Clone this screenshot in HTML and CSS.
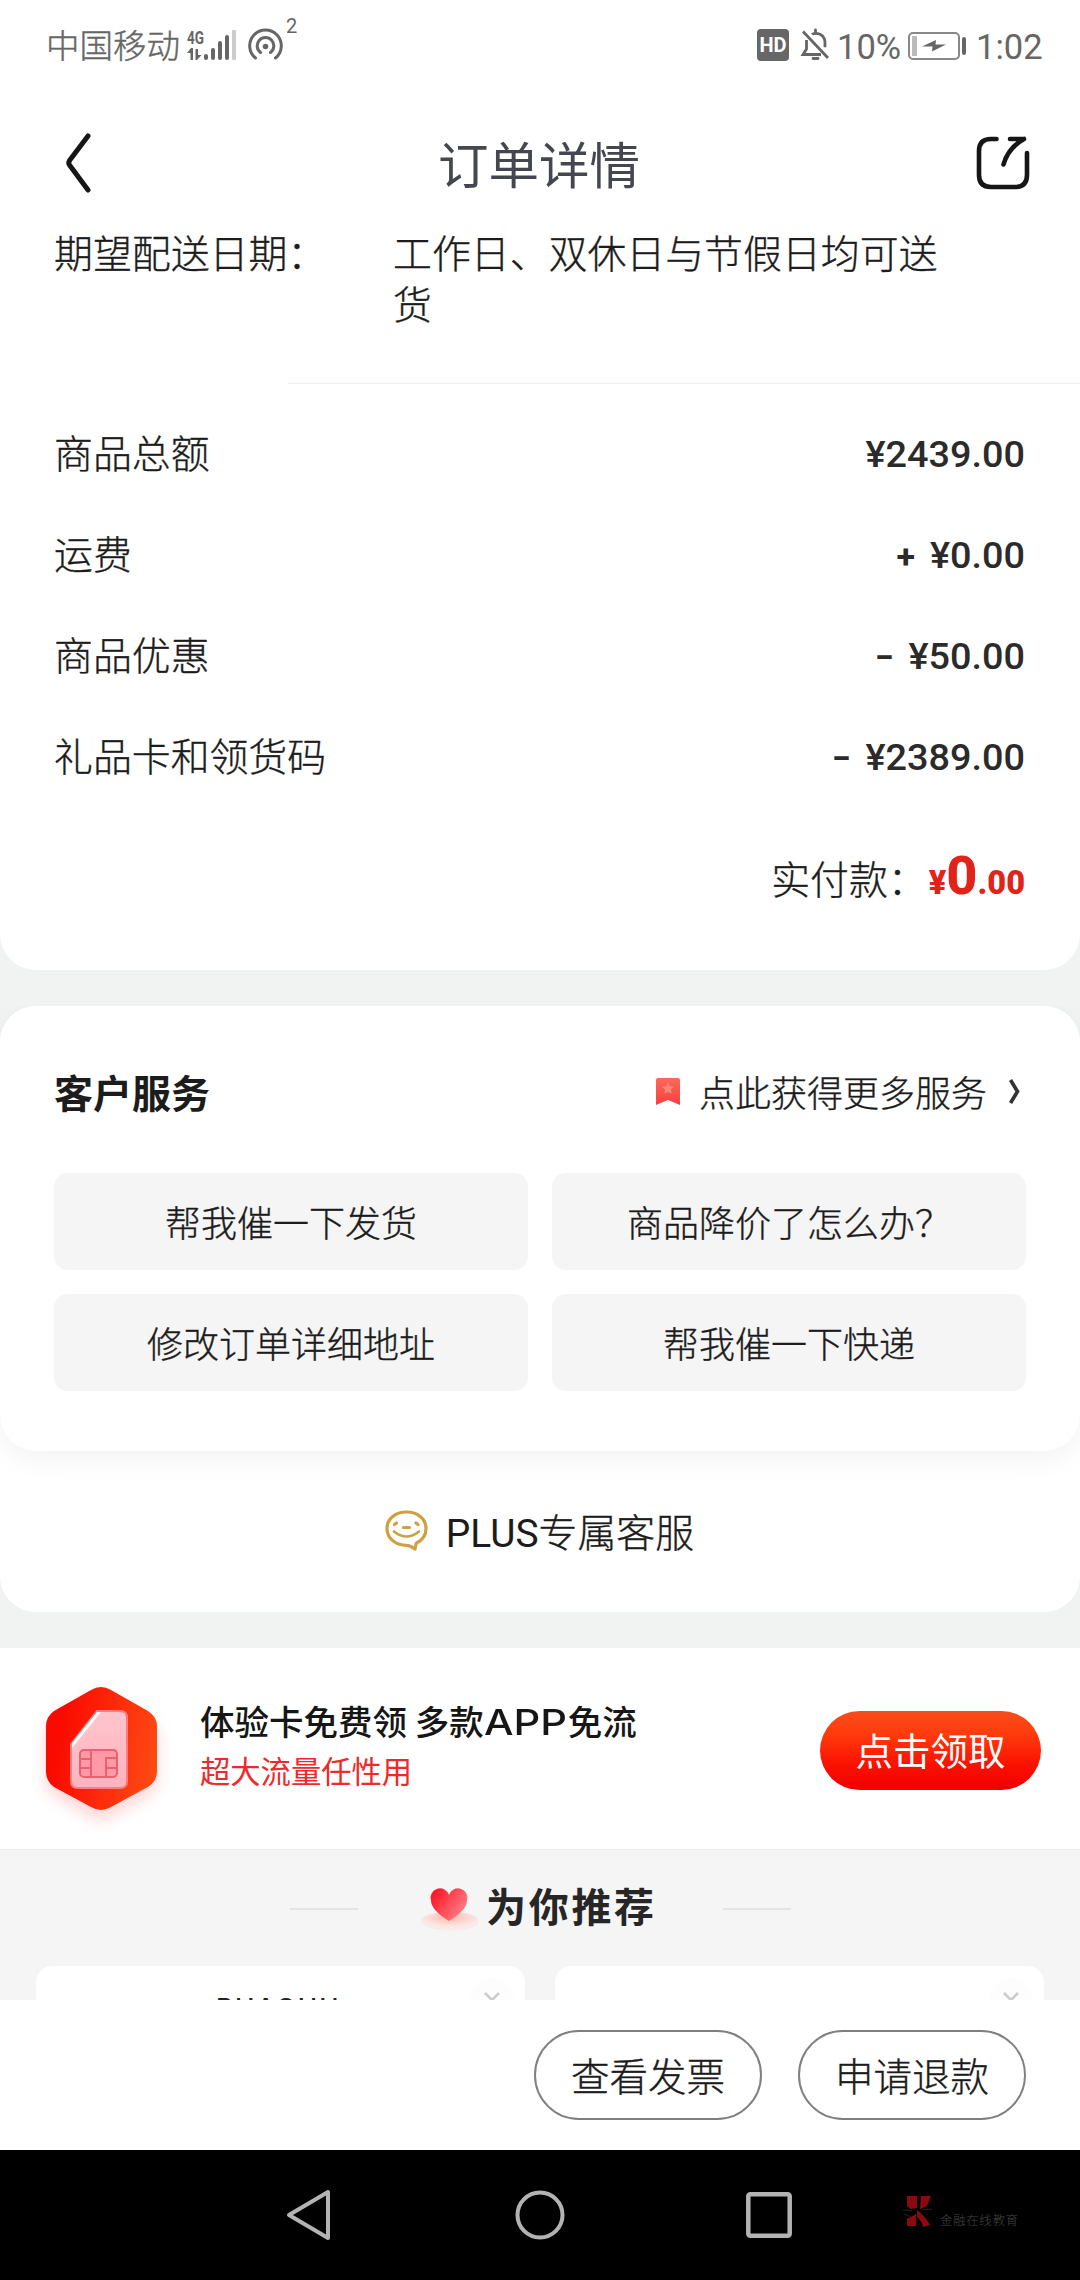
FILE: index.html
```html
<!DOCTYPE html>
<html lang="zh-CN">
<head>
<meta charset="utf-8">
<title>订单详情</title>
<link rel="stylesheet" href="styles.css">
</head>
<body>
<div class="screen">
  <header class="status">
    <span class="carrier">中国移动</span>
    <svg class="signal" width="50" height="34" viewBox="0 0 50 34">
      <text x="0" y="16" class="net" textLength="17" lengthAdjust="spacingAndGlyphs">4G</text>
      <g fill="#666"><path d="M0 25 4 20h2v12H3.500v-7zM8.500 21H11v6h3.500L10 32H8.500z"/><rect x="17" y="26" width="4" height="6" rx="2"/><rect x="24" y="20" width="4" height="12" rx="2"/><rect x="31" y="13" width="4" height="19" rx="2"/><rect x="38" y="7" width="4" height="25" rx="2"/></g>
      <rect x="45" y="2" width="4" height="30" rx="1" fill="#ccc"/>
    </svg>
    <svg class="hotspot" width="35" height="32" viewBox="0 0 35 32" fill="none" stroke="#666" stroke-width="3" stroke-linecap="round"><path d="M7.500 29A15.800 15.800 0 1 1 27.500 29M12.500 23.500A8.300 8.300 0 1 1 22.500 23.500"/><circle cx="17.500" cy="17.500" r="2.800" fill="#666" stroke="none"/></svg>
    <sup class="count">2</sup>
    <span class="grow"></span>
    <span class="hd">HD</span>
    <svg class="bell" width="29" height="32" viewBox="0 0 29 32" fill="none" stroke="#666" stroke-width="2.800"><path d="M2 2.500 27 29"/><path d="M11 5.500C12 4.500 13 4.300 14.500 4.300c6 0 9.500 4 9.500 10v4M5.500 11v9L2 25.500h18"/><path d="M12 29.500h5M14.500 1v3" stroke-linecap="round"/></svg>
    <span class="pct">10%</span>
    <svg class="battery" width="59" height="28" viewBox="0 0 59 28"><rect x="1" y="1" width="50" height="26" rx="4" fill="none" stroke="#888" stroke-width="2"/><rect x="4" y="4" width="5" height="20" fill="#bbb"/><path d="M14 14.500 28 8l-.5 4.500H38L24 19.500l.5-5z" fill="#666"/><rect x="54" y="5" width="4" height="18" rx="2" fill="#666"/></svg>
    <span class="clock">1:02</span>
  </header>

  <nav class="titlebar">
    <svg width="28" height="62" viewBox="0 0 28 62" fill="none" stroke="#161616" stroke-width="5" stroke-linecap="round" stroke-linejoin="round"><path d="M24 4 5.500 28.500Q4 31 5.500 33L24 58"/></svg>
    <h1>订单详情</h1>
    <svg width="54" height="54" viewBox="0 0 54 54" fill="none" stroke="#161616" stroke-width="4.600" stroke-linecap="round" stroke-linejoin="round"><path d="M20.500 3H15Q3 3 3 15v24Q3 51 15 51h24Q51 51 51 39V17"/><path d="M34 3h14Q32 12 27.500 28.500M48 3l-5 2.500"/></svg>
  </nav>

  <section class="card order">
    <div class="delivery"><span>期望配送日期：</span><p>工作日、双休日与节假日均可送货</p></div>
    <hr>
    <dl>
      <div><dt>商品总额</dt><dd>¥2439.00</dd></div>
      <div><dt>运费</dt><dd><i>+</i>¥0.00</dd></div>
      <div><dt>商品优惠</dt><dd><i>−</i>¥50.00</dd></div>
      <div><dt>礼品卡和领货码</dt><dd><i>−</i>¥2389.00</dd></div>
    </dl>
    <div class="total"><span>实付款：</span><strong>¥<b>0</b>.00</strong></div>
  </section>

  <section class="card support">
    <div class="service">
      <div class="service-head">
        <h2>客户服务</h2>
        <svg class="mark" width="24" height="27" viewBox="0 0 24 27"><defs><linearGradient id="bm" x2="0" y2="1"><stop stop-color="#f9695a"/><stop offset="1" stop-color="#f93f3f"/></linearGradient></defs><path d="M2 0h20q2 0 2 2v25l-12-5-12 5V2q0-2 2-2z" fill="url(#bm)"/><path d="m12 4.500 1.900 3.700 4.100.6-3 2.900.7 4.100-3.700-1.900-3.700 1.900.7-4.100-3-2.900 4.100-.6z" fill="#ff8577"/></svg>
        <span class="more">点此获得更多服务</span>
        <svg class="chev" width="11" height="25" viewBox="0 0 11 25" fill="none" stroke="#333" stroke-width="3.600"><path d="M1.500 1 8.500 12.500 1.500 24"/></svg>
      </div>
      <div class="grid"><a>帮我催一下发货</a><a>商品降价了怎么办？</a><a>修改订单详细地址</a><a>帮我催一下快递</a></div>
    </div>
    <div class="plus">
      <svg width="43" height="41" viewBox="0 0 43 41" fill="none" stroke="#cfa040" stroke-width="3.200" stroke-linecap="round" stroke-linejoin="round"><path d="M21.500 2C10 2 2 9 2 18.500S10 35 21.500 35.300q3.500 0 8.500 3.700l1.200-5.700C37 30.500 41 25 41 18.500 41 9 33 2 21.500 2z"/><path d="M9 21.500q12.500 10 25 0" stroke-width="2.600"/><path d="M9.500 14.500l2-1.500M33 14.500 31 13M18.500 17.500h6"/></svg>
      <span><em>PLUS</em>专属客服</span>
    </div>
  </section>

  <section class="promo">
    <svg class="sim" width="140" height="160" viewBox="0 0 140 160">
      <defs><linearGradient id="hx" x1="0" y1=".4" x2="1" y2=".6"><stop offset=".1" stop-color="#fa0a00"/><stop offset="1" stop-color="#ff4a14"/></linearGradient><linearGradient id="sm" x2="0" y2="1"><stop stop-color="#ffc4cc"/><stop offset="1" stop-color="#ffb4c0"/></linearGradient><filter id="gl" x="-30%" y="-30%" width="160%" height="160%"><feGaussianBlur stdDeviation="8"/></filter></defs>
      <path d="M62 13q9-5 18 0l38 22q9 6 9 15v44q0 9-9 15l-38 22q-9 5-18 0l-38-22q-8-6-8-15V50q0-9 8-15z" fill="#ff4040" opacity=".22" filter="url(#gl)" transform="translate(0 8)"/>
      <path d="M61 12q10-6 20 0l37 21q9 6 9 15v46q0 9-9 15l-37 20q-10 6-20 0l-37-20q-8-6-8-15V48q0-9 8-15z" fill="url(#hx)"/>
      <path d="M67 33h23q7 0 7 7v63q0 7-7 7H48q-7 0-7-7V66z" fill="url(#sm)" stroke="#ff7d83" stroke-width="2"/>
      <path d="M67 34h4L42 70v-5z" fill="#fff"/>
      <g fill="none" stroke="#ec6070" stroke-width="2"><rect x="50" y="72" width="37" height="27" rx="4" fill="#ff9aa6"/><path d="M61 72v27M50 81h11M50 90h11M87 80H76v19M76 90h11"/></g>
    </svg>
    <div class="promo-text"><h3>体验卡免费领 多款<em>APP</em>免流</h3><p>超大流量任性用</p></div>
    <a class="claim">点击领取</a>
  </section>

  <section class="recommend">
    <div class="rec-head">
      <span class="rule"></span>
      <svg class="heart" width="62" height="46" viewBox="0 0 62 46"><defs><linearGradient id="ht" x2="1" y2=".6"><stop offset=".1" stop-color="#ff1424"/><stop offset="1" stop-color="#ff7f86"/></linearGradient><radialGradient id="el" cy=".3"><stop stop-color="#ffb9b0"/><stop offset="1" stop-color="#fae9e7"/></radialGradient></defs><ellipse cx="31" cy="34" rx="29" ry="9.500" fill="url(#el)"/><path d="M30 34Q12 23 12 13.500A9 9 0 0 1 30 8 9 9 0 0 1 48 13.500Q48 23 30 34z" fill="url(#ht)"/></svg>
      <h2>为你推荐</h2>
      <span class="rule"></span>
    </div>
    <div class="goods">
      <article><span class="brand">BHAOHU</span><span class="close"><svg width="18" height="18" viewBox="0 0 18 18" stroke="#ccc" stroke-width="2.600"><path d="m2 2 14 14M16 2 2 16"/></svg></span></article>
      <article><span class="close"><svg width="18" height="18" viewBox="0 0 18 18" stroke="#ccc" stroke-width="2.600"><path d="m2 2 14 14M16 2 2 16"/></svg></span></article>
    </div>
  </section>

  <footer class="actions"><a>查看发票</a><a>申请退款</a></footer>

  <nav class="sysnav">
    <svg width="46" height="52" viewBox="0 0 46 52" fill="none" stroke="#b3b3b3" stroke-width="4" stroke-linejoin="round"><path d="M42 3v46L3 26z"/></svg>
    <svg width="50" height="50" viewBox="0 0 50 50" fill="none" stroke="#b3b3b3" stroke-width="4"><circle cx="26" cy="25" r="22.500"/></svg>
    <svg width="46" height="46" viewBox="0 0 46 46" fill="none" stroke="#b3b3b3" stroke-width="4.500"><rect x="2.300" y="2.300" width="41.400" height="41.400" rx="2"/></svg>
    <div class="stamp">
      <svg width="32" height="34" viewBox="0 0 32 34"><path d="M5 1h10v12l-6 1-4-3zM19 1h10l-4 10-7 3zM5 24l9-5v12H5zM15 15q9 7 13 15l-7 2q-1-6-6-10z" fill="#8a0a10"/><path d="M1 15l9 1M20 15l10-1M2 19l7 3" stroke="#222" fill="none"/></svg>
      <span>金融在线教育</span>
    </div>
  </nav>
</div>
</body>
</html>
```
FILE: styles.css
```css
* { box-sizing: border-box; margin: 0; padding: 0; }
body { background: #f1f3f3; }
svg { display: block; flex: none; overflow: visible; }
h1, h2, h3, em, i, sup { font-weight: 400; font-style: normal; }

.screen {
  width: 1080px; height: 2280px; overflow: hidden;
  display: flex; flex-direction: column;
  font-family: "Noto Sans CJK SC", sans-serif;
  font-weight: 300; font-size: 38.900px; line-height: 50px; color: #1c1c1c;
  white-space: nowrap;
}
.grow { flex: 1; }
.delivery, dt, .total span, .more, .grid, .plus span, .actions { -webkit-text-stroke: .35px currentColor; }

.status {
  height: 90px; flex: none; background: #fff; color: #666;
  display: flex; align-items: flex-start; padding: 0 39px 0 46px;
}
.carrier { font-size: 33.500px; line-height: 46px; margin-top: 21px; width: 134px; -webkit-text-stroke: .4px currentColor; }
.signal { margin: 28px 0 0 7px; }
.net { font: 700 19px Roboto, sans-serif; fill: #666; }
.hotspot { margin: 29px 0 0 11px; }
.count { font: 400 20px/20px Roboto, sans-serif; margin: 16px 0 0 3px; }
.hd {
  width: 32px; height: 32px; border-radius: 4px; background: #666; color: #fff;
  font: 700 20px/33px Roboto, sans-serif; text-align: center; margin-top: 29px;
}
.bell { margin: 29px 0 0 12px; }
.pct, .clock { font: 400 34.500px/40px Roboto, sans-serif; margin-top: 27px; }
.pct { width: 63px; margin-left: 7px; }
.battery { margin: 32px 0 0 8px; }
.clock { margin-left: 9px; width: 65px; }

.titlebar {
  height: 142px; flex: none; background: #fff; padding: 3px 50px 0 64px;
  display: flex; align-items: center; justify-content: space-between;
}
.titlebar h1 { font-size: 50.500px; line-height: 60px; color: #44474f; margin: -2px 0 0 10px; }

.card { background: #fff; flex: none; }
.order { height: 738px; border-radius: 0 0 36px 36px; padding: 0 55px 0 54px; }
.delivery { display: flex; height: 157px; line-height: 51px; margin-top: -6px; }
.delivery span { width: 339px; }
.delivery p { width: 560px; white-space: normal; }
hr { border: 0; height: 1px; background: #ececec; margin: 0 -55px 0 234px; }
dl { padding-top: 17px; }
dl div { display: flex; justify-content: space-between; height: 101px; line-height: 101px; }
dd { font-family: Roboto, sans-serif; font-weight: 500; font-size: 37.800px; color: #2b2b2b; padding-top: 3px; }
dd i { margin-right: 15px; font-weight: 700; font-size: 34px; }
.total { display: flex; justify-content: flex-end; align-items: baseline; line-height: 60px; margin-top: 41px; }
.total span { margin-right: 2px; }
.total strong { font: 900 32.500px/60px Roboto, sans-serif; color: #e2231a; }
.total b { font-size: 54px; font-weight: 800; }

.support { margin-top: 36px; height: 606px; border-radius: 36px; }
.service { height: 445px; border-radius: 36px; background: #fff; box-shadow: 0 8px 28px rgba(0,0,0,.05); padding: 60px 54px 0; clip-path: inset(0 0 -50px 0); }
.service-head { display: flex; align-items: center; height: 50px; }
.service-head h2 { font-weight: 700; font-size: 39px; flex: 1; }
.more { font-size: 36px; margin: 0 22px 0 19px; }
.chev { margin-right: 6px; }
.grid { display: grid; grid-template-columns: 1fr 1fr; gap: 24px; margin-top: 57px; font-size: 36px; }
.grid a { height: 97px; line-height: 97px; background: #f5f5f5; border-radius: 14px; text-align: center; }
.plus { display: flex; justify-content: center; gap: 18px; align-items: center; height: 158px; font-family: Roboto, "Noto Sans CJK SC", sans-serif; }
.plus svg { margin-left: -1px; }
.plus span { padding-top: 7px; }
.plus em { -webkit-text-stroke: 0; }

.promo { height: 202px; flex: none; margin-top: 36px; background: #fff; border-bottom: 1px solid #eee; display: flex; padding: 0 39px 0 30px; }
.sim { margin-top: 30px; }
.promo-text { flex: 1; padding: 49px 0 0 30px; }
.promo-text h3 { font-size: 34.500px; line-height: 46px; height: 46px; font-weight: 500; color: #161616; }
.promo-text em { display: inline-block; width: 84px; transform: scaleX(1.19); transform-origin: left; font-family: Inter, sans-serif; font-weight: 500; font-size: 35px; line-height: 40px; }
.promo-text p { font-size: 30.300px; line-height: 44px; font-weight: 400; color: #ee2a2a; margin-top: 5px; }
.claim { width: 221px; height: 79px; margin-top: 63px; border-radius: 40px; background: linear-gradient(#f94d1b, #ff3a0c 30%, #fb0f00 70%, #f00000); color: #fff; text-align: center; font-weight: 400; font-size: 37.500px; line-height: 76px; }

.recommend { flex: none; height: 150px; overflow: hidden; background: #f5f5f5; }
.rec-head { display: flex; height: 116px; align-items: center; padding: 2px 289px 0 290px; }
.rule { width: 68px; height: 2px; background: #e4e4e4; }
.heart { margin: 1px 0 0 61px; }
.rec-head h2 { font-weight: 700; font-size: 40px; letter-spacing: 2.700px; color: #262626; flex: 1; margin: -8px 0 0 5px; }
.goods { display: flex; gap: 30px; padding: 0 36px; }
.goods article { flex: 1; height: 400px; background: #fff; border-radius: 16px; display: flex; justify-content: flex-end; padding: 12px 11px; }
.brand { flex: 1; padding: 16px 0 0 169px; font: 500 26px/28px Inter, sans-serif; letter-spacing: 2px; color: #222; }
.close { width: 44px; height: 44px; border-radius: 50%; background: #fdfdfd; display: grid; place-items: center; }

.actions { height: 150px; flex: none; background: #fff; display: flex; justify-content: flex-end; gap: 36px; padding: 30px 54px; font-size: 38.500px; }
.actions a { width: 228px; height: 90px; border: 2px solid #808080; border-radius: 45px; text-align: center; line-height: 84px; }

.sysnav { height: 130px; flex: none; background: #000; display: flex; align-items: center; padding: 0 0 0 286px; gap: 182px; }
.stamp { display: flex; align-items: center; gap: 6px; margin: -6px 0 0 -72px; font-size: 12.500px; line-height: 16px; color: #444; }
.stamp span { margin-top: 16px; letter-spacing: .6px; }
```
